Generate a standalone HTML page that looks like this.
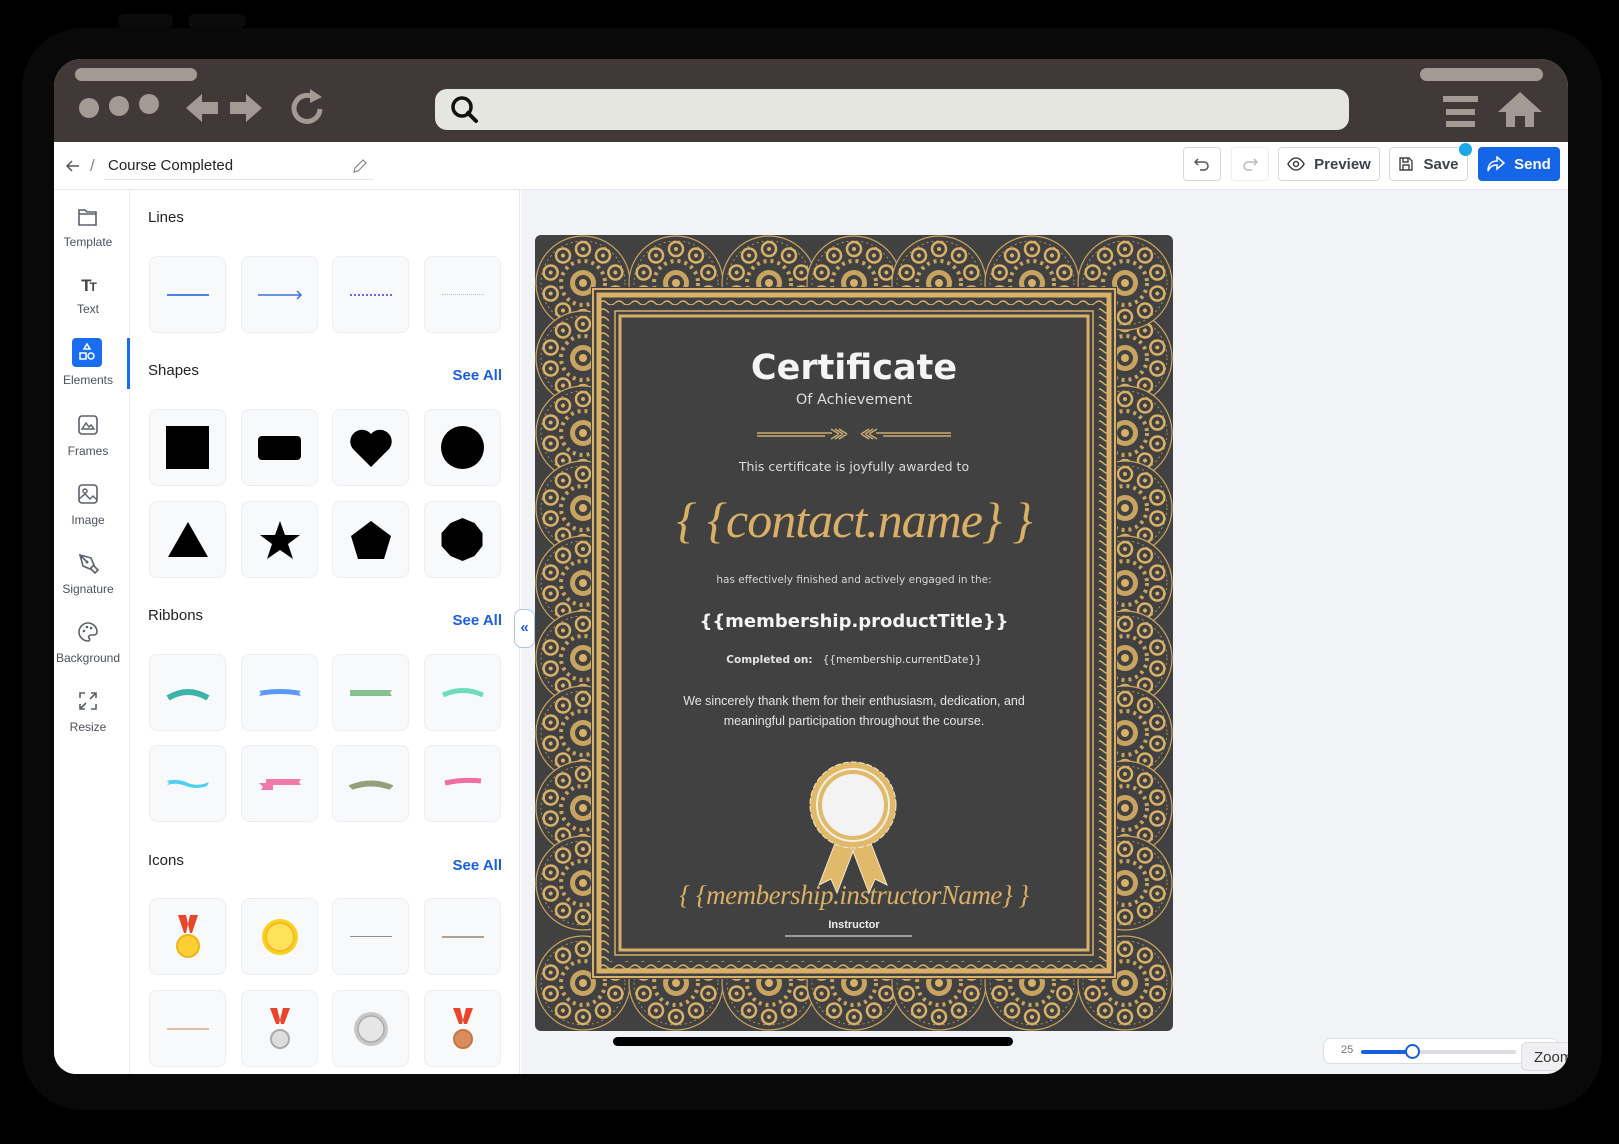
<!DOCTYPE html>
<html><head><meta charset="utf-8">
<style>
*{box-sizing:border-box;margin:0;padding:0}
body{width:1619px;height:1144px;background:#000;position:relative;overflow:hidden;font-family:"Liberation Sans",Arial,sans-serif}
.abs{position:absolute}
.bezel{left:22px;top:28px;width:1580px;height:1082px;background:#0a0909;border-radius:60px}
.win{left:54px;top:59px;width:1514px;height:1015px;background:#fff;border-radius:28px 28px 22px 22px;overflow:hidden}
.tb{left:0;top:0;width:1514px;height:83px;background:#413838}
.pill{background:#a39a93;border-radius:7px;height:13px}
.dot{width:20px;height:20px;border-radius:50%;background:#a39a93}
.appbar{left:0;top:83px;width:1514px;height:48px;background:#fff;border-bottom:1px solid #e8e9ee}
.btn{position:absolute;top:5px;height:34px;border:1px solid #d6d8de;border-radius:4px;background:#fff;font-weight:bold;font-size:15px;color:#3c4250;display:flex;align-items:center;justify-content:center;gap:9px}
.side{left:0;top:131px;width:76px;height:884px;background:#fff;border-right:1px solid #eceef2}
.si{position:absolute;left:0;width:68px;text-align:center;font-size:12px;color:#4b5160}
.si svg{display:block;margin:0 auto 8px}
.panel{left:76px;top:131px;width:390px;height:884px;background:#fff;border-right:1px solid #e4e6ea}
.h{position:absolute;left:18px;font-size:15px;color:#222;font-weight:500}
.see{position:absolute;right:17px;font-size:15px;color:#1a5fe0;font-weight:bold}
.card{position:absolute;width:77px;height:77px;background:#f8f9fb;border:1px solid #eceef1;border-radius:8px;display:flex;align-items:center;justify-content:center}
.canvas{left:467px;top:131px;width:1047px;height:884px;background:#f2f3f7}
.ct{position:absolute;left:0;width:638px;text-align:center;color:#e9e9e9}
</style></head><body>
<div class="abs bezel"></div>
<div class="abs" style="left:118px;top:14px;width:55px;height:14px;background:#0c0b0b;border-radius:6px"></div>
<div class="abs" style="left:188px;top:14px;width:58px;height:14px;background:#0c0b0b;border-radius:6px"></div>
<div class="abs win">
  <div class="abs tb">
    <div class="abs pill" style="left:21px;top:9px;width:122px"></div>
    <div class="abs pill" style="left:1366px;top:9px;width:123px"></div>
    <div class="abs dot" style="left:25px;top:39px"></div>
    <div class="abs dot" style="left:55px;top:37px"></div>
    <div class="abs dot" style="left:85px;top:35px"></div>
    <svg class="abs" style="left:132px;top:34px" width="84" height="30" viewBox="0 0 84 30"><path d="M0 15 L16 1 V9 H32 V21 H16 V29Z" fill="#a39a93"/><path d="M76 15 L60 1 V9 H44 V21 H60 V29Z" fill="#a39a93"/></svg>
    <svg class="abs" style="left:236px;top:28px" width="36" height="38" viewBox="0 0 36 38"><path d="M26 12 A13 13 0 1 0 30 22" fill="none" stroke="#a39a93" stroke-width="5"/><path d="M20 2 L32 10 L20 16Z" fill="#a39a93"/></svg>
    <div class="abs" style="left:381px;top:30px;width:914px;height:41px;background:#e6e6e1;border-radius:12px"></div>
    <svg class="abs" style="left:396px;top:36px" width="30" height="30" viewBox="0 0 30 30"><circle cx="12" cy="12" r="9" fill="none" stroke="#111" stroke-width="3.5"/><path d="M18 18 L26 26" stroke="#111" stroke-width="4" stroke-linecap="round"/></svg>
    <div class="abs" style="left:1389px;top:37px;width:35px;height:6px;background:#a39a93"></div>
    <div class="abs" style="left:1392px;top:50px;width:29px;height:6px;background:#a39a93"></div>
    <div class="abs" style="left:1392px;top:62px;width:29px;height:6px;background:#a39a93"></div>
    <svg class="abs" style="left:1444px;top:33px" width="44" height="36" viewBox="0 0 44 36"><path d="M22 0 L44 20 H36 V35 H27 V24 H17 V35 H8 V20 H0Z" fill="#a39a93"/></svg>
  </div>
  <div class="abs appbar">
    <svg class="abs" style="left:11px;top:16px" width="16" height="16" viewBox="0 0 16 16"><path d="M14 8H2M7 3L2 8l5 5" fill="none" stroke="#555" stroke-width="1.5"/></svg>
    <div class="abs" style="left:36px;top:14px;font-size:17px;color:#888">/</div>
    <div class="abs" style="left:54px;top:15px;font-size:15px;color:#222">Course Completed</div>
    <div class="abs" style="left:50px;top:37px;width:270px;height:1px;background:#e3e5ea"></div>
    <svg class="abs" style="left:298px;top:16px" width="16" height="16" viewBox="0 0 16 16"><path d="M11 2l3 3-8 8-4 1 1-4z" fill="none" stroke="#888" stroke-width="1.2"/></svg>
    <div class="btn" style="left:1129px;width:38px"><svg width="16" height="14" viewBox="0 0 16 14"><path d="M4 2L1 5l3 3M1 5h9a4 4 0 010 8H6" fill="none" stroke="#555" stroke-width="1.5"/></svg></div>
    <div class="btn" style="left:1177px;width:38px;border-color:#eee"><svg width="16" height="14" viewBox="0 0 16 14"><path d="M12 2l3 3-3 3M15 5H6a4 4 0 000 8h4" fill="none" stroke="#bbb" stroke-width="1.5"/></svg></div>
    <div class="btn" style="left:1224px;width:102px"><svg width="18" height="14" viewBox="0 0 18 14"><path d="M1 7s3-6 8-6 8 6 8 6-3 6-8 6-8-6-8-6z" fill="none" stroke="#444" stroke-width="1.5"/><circle cx="9" cy="7" r="2.5" fill="none" stroke="#444" stroke-width="1.5"/></svg>Preview</div>
    <div class="btn" style="left:1335px;width:79px"><svg width="16" height="16" viewBox="0 0 16 16"><path d="M2 2h9l3 3v9H2z M5 2v4h5V2 M5 14v-5h6v5" fill="none" stroke="#444" stroke-width="1.4"/></svg>Save</div>
    <div class="abs" style="left:1405px;top:1px;width:13px;height:13px;border-radius:50%;background:#1ba7e8"></div>
    <div class="btn" style="left:1424px;width:82px;background:#1565e9;border-color:#1565e9;color:#fff"><svg width="18" height="16" viewBox="0 0 18 16"><path d="M10 1l7 6-7 6V9C5 9 3 11 1 15c0-6 3-10 9-10z" fill="none" stroke="#fff" stroke-width="1.5"/></svg>Send</div>
  </div>
  <div class="abs side">
    <div class="si" style="top:17px"><svg width="22" height="20" viewBox="0 0 22 20"><path d="M2 3h6l2 2h9v13H2z M2 7h17" fill="none" stroke="#5b606c" stroke-width="1.6"/></svg>Template</div>
    <div class="si" style="top:86px"><div style="font-weight:bold;font-size:17px;color:#444;margin-bottom:6px;letter-spacing:-2px">T<span style="font-size:12px">T</span></div>Text</div>
    <div class="abs" style="left:18px;top:148px;width:30px;height:29px;background:#1a6cf0;border-radius:4px"></div>
    <svg class="abs" style="left:24px;top:152px" width="18" height="20" viewBox="0 0 18 20"><path d="M9 2l3 5H6z" fill="none" stroke="#fff" stroke-width="1.5"/><rect x="2" y="11" width="6" height="6" fill="none" stroke="#fff" stroke-width="1.5"/><circle cx="13" cy="14" r="3" fill="none" stroke="#fff" stroke-width="1.5"/></svg>
    <div class="si" style="top:183px">Elements</div>
    <div class="abs" style="left:73px;top:148px;width:3px;height:51px;background:#1a6cf0"></div>
    <div class="si" style="top:224px"><svg width="22" height="22" viewBox="0 0 22 22"><rect x="2" y="2" width="18" height="18" rx="3" fill="none" stroke="#5b606c" stroke-width="1.6"/><path d="M5 15l4-6 3 4 2-2 3 4z" fill="none" stroke="#5b606c" stroke-width="1.4"/></svg>Frames</div>
    <div class="si" style="top:293px"><svg width="22" height="22" viewBox="0 0 22 22"><rect x="2" y="2" width="18" height="18" rx="3" fill="none" stroke="#5b606c" stroke-width="1.6"/><circle cx="8" cy="8" r="2" fill="none" stroke="#5b606c" stroke-width="1.4"/><path d="M2 16l6-5 5 5 3-3 4 4" fill="none" stroke="#5b606c" stroke-width="1.4"/></svg>Image</div>
    <div class="si" style="top:362px"><svg width="22" height="22" viewBox="0 0 22 22"><path d="M3 3l11 3 3 7-4 4-7-3z M3 3l6 6 M14 17l4 4 3-3-4-4" fill="none" stroke="#5b606c" stroke-width="1.6"/><circle cx="10" cy="10" r="1.5" fill="#5b606c"/></svg>Signature</div>
    <div class="si" style="top:431px"><svg width="22" height="22" viewBox="0 0 22 22"><path d="M11 2a9 9 0 100 18c2 0 2-2 1-3s0-3 2-3h3a3 3 0 003-3c0-5-4-9-9-9z" fill="none" stroke="#5b606c" stroke-width="1.6"/><circle cx="7" cy="10" r="1.3" fill="#5b606c"/><circle cx="10" cy="6" r="1.3" fill="#5b606c"/><circle cx="14" cy="7" r="1.3" fill="#5b606c"/></svg>Background</div>
    <div class="si" style="top:500px"><svg width="22" height="22" viewBox="0 0 22 22"><path d="M3 8V3h5 M14 3h5v5 M3 14v5h5 M19 14v5h-5 M19 3l-6 6 M3 19l6-6" fill="none" stroke="#5b606c" stroke-width="1.6"/></svg>Resize</div>
  </div>
  <div class="abs panel">
    <div class="h" style="top:19px">Lines</div>
    <div class="card" style="left:19px;top:66px"><div style="width:42px;height:2px;background:#4a82e6"></div></div>
    <div class="card" style="left:111px;top:66px"><svg width="46" height="10" viewBox="0 0 46 10"><path d="M1 5h43M40 1l4 4-4 4" fill="none" stroke="#3a74e0" stroke-width="1.5"/></svg></div>
    <div class="card" style="left:202px;top:66px"><div style="width:42px;border-top:2px dotted #6a6ae0"></div></div>
    <div class="card" style="left:294px;top:66px"><div style="width:42px;border-top:1px dotted #b5b5e8"></div></div>
    <div class="h" style="top:172px">Shapes</div><div class="see" style="top:177px">See All</div>
    <div class="card" style="left:19px;top:219px"><div style="width:43px;height:43px;background:#000"></div></div>
    <div class="card" style="left:111px;top:219px"><div style="width:43px;height:24px;background:#000;border-radius:4px"></div></div>
    <div class="card" style="left:202px;top:219px"><svg width="44" height="40" viewBox="0 0 44 40"><path d="M22 39L4 21A11 11 0 0122 6a11 11 0 0118 15z" fill="#000"/></svg></div>
    <div class="card" style="left:294px;top:219px"><div style="width:43px;height:43px;background:#000;border-radius:50%"></div></div>
    <div class="card" style="left:19px;top:311px"><svg width="42" height="37" viewBox="0 0 42 37"><path d="M21 1L41 36H1z" fill="#000"/></svg></div>
    <div class="card" style="left:111px;top:311px"><svg width="42" height="40" viewBox="0 0 42 40"><path d="M21 1l5 14h15l-12 9 5 15-13-9-13 9 5-15L1 15h15z" fill="#000"/></svg></div>
    <div class="card" style="left:202px;top:311px"><svg width="42" height="40" viewBox="0 0 42 40"><path d="M21 1l20 15-7 23H8L1 16z" fill="#000"/></svg></div>
    <div class="card" style="left:294px;top:311px"><svg width="43" height="43" viewBox="0 0 43 43"><path d="M21.5 0l12 5 8 10v13l-8 10-12 5-12-5-9-10V15l9-10z" fill="#000"/></svg></div>
    <div class="h" style="top:417px">Ribbons</div><div class="see" style="top:422px">See All</div>
    <div class="card" style="left:19px;top:464px"><svg width="44" height="14" viewBox="0 0 44 14"><path d="M2 12 Q22 0 42 12" fill="none" stroke="#3bb5a8" stroke-width="6"/></svg></div>
    <div class="card" style="left:111px;top:464px"><svg width="44" height="10" viewBox="0 0 44 10"><path d="M1 3 Q22 -1 43 3 L41 5 43 8 Q22 4 1 8 L3 5z" fill="#5a9af5"/></svg></div>
    <div class="card" style="left:202px;top:464px"><svg width="44" height="10" viewBox="0 0 44 10"><path d="M1 2h42l-2 3 2 3H1z" fill="#87c08f"/></svg></div>
    <div class="card" style="left:294px;top:464px"><svg width="44" height="14" viewBox="0 0 44 14"><path d="M2 9 Q22 0 42 9" fill="none" stroke="#6fdcc0" stroke-width="5"/></svg></div>
    <div class="card" style="left:19px;top:555px"><svg width="44" height="12" viewBox="0 0 44 12"><path d="M1 3 Q12 0 22 5 Q32 9 43 4 L41 8 Q30 12 20 8 Q10 4 1 7 L3 5z" fill="#4fd0f0"/></svg></div>
    <div class="card" style="left:111px;top:555px"><svg width="44" height="14" viewBox="0 0 44 14"><path d="M8 2h35l-2 3 2 3H8z M1 6h14v7H3l2-3z" fill="#ef7aaa"/></svg></div>
    <div class="card" style="left:202px;top:555px"><svg width="44" height="12" viewBox="0 0 44 12"><path d="M2 8 Q22 0 42 8 L40 10 Q22 4 4 10z" fill="#95a07a" stroke="#95a07a" stroke-width="3"/></svg></div>
    <div class="card" style="left:294px;top:555px"><svg width="44" height="14" viewBox="0 0 44 14"><path d="M4 6 Q22 2 40 4" fill="none" stroke="#ee6fa3" stroke-width="5"/></svg></div>
    <div class="h" style="top:662px">Icons</div><div class="see" style="top:667px">See All</div>
    <div class="card" style="left:19px;top:708px"><svg width="30" height="44" viewBox="0 0 30 44"><path d="M5 0h8l4 18h-6z M25 0h-8l-4 18h6z" fill="#e8452a"/><circle cx="15" cy="31" r="11" fill="#fcd033" stroke="#f2b21b" stroke-width="2"/></svg></div>
    <div class="card" style="left:111px;top:708px"><svg width="38" height="38" viewBox="0 0 38 38"><circle cx="19" cy="19" r="18" fill="#fbd01f"/><circle cx="19" cy="19" r="14" fill="#fde25a" stroke="#f2b21b" stroke-width="1.5"/></svg></div>
    <div class="card" style="left:202px;top:708px"><div style="width:42px;height:1px;background:#9c8c80"></div></div>
    <div class="card" style="left:294px;top:708px"><div style="width:42px;height:2px;background:#b0a090"></div></div>
    <div class="card" style="left:19px;top:800px"><div style="width:42px;height:2px;background:#d8c4a0"></div></div>
    <div class="card" style="left:111px;top:800px"><svg width="24" height="42" viewBox="0 0 24 42"><path d="M2 0h7l4 16h-5z M22 0h-7l-4 16h5z" fill="#e8452a"/><circle cx="12" cy="31" r="9" fill="#ddd" stroke="#aaa" stroke-width="2"/></svg></div>
    <div class="card" style="left:202px;top:800px"><svg width="36" height="36" viewBox="0 0 36 36"><circle cx="18" cy="18" r="17" fill="#c8c8c8"/><circle cx="18" cy="18" r="13" fill="#e6e6e6" stroke="#aaa" stroke-width="1.5"/></svg></div>
    <div class="card" style="left:294px;top:800px"><svg width="24" height="42" viewBox="0 0 24 42"><path d="M2 0h7l4 16h-5z M22 0h-7l-4 16h5z" fill="#e8452a"/><circle cx="12" cy="31" r="9" fill="#d98d5c" stroke="#c57746" stroke-width="2"/></svg></div>
  </div>
  <div class="abs canvas">
    <div class="abs" style="left:-7px;top:419px;width:21px;height:39px;background:#fff;border:1px solid #a9c4f4;border-radius:8px;color:#1a5fe0;font-size:15px;text-align:center;line-height:35px;font-weight:bold">«</div>
    <div class="abs" style="left:92px;top:847px;width:400px;height:9px;background:#000;border-radius:5px"></div>
    <div class="abs" style="left:802px;top:848px;width:236px;height:26px;background:#fff;border:1px solid #dcdde2;border-radius:8px"></div>
    <div class="abs" style="left:820px;top:854px;font-size:11px;color:#777">25</div>
    <div class="abs" style="left:840px;top:860px;width:155px;height:4px;background:#dcdde2;border-radius:2px"></div>
    <div class="abs" style="left:840px;top:860px;width:52px;height:4px;background:#1a5fe0;border-radius:2px"></div>
    <div class="abs" style="left:884px;top:854px;width:15px;height:15px;border-radius:50%;background:#fff;border:2px solid #1a5fe0"></div>
    <div class="abs" style="left:1000px;top:852px;width:60px;height:29px;background:#f0f0f2;border:1px solid #ddd;border-radius:6px;font-size:15px;color:#333;padding:6px 0 0 12px">Zoom</div>
  </div>
  <!-- certificate -->
  <div class="abs" style="left:481px;top:176px;width:638px;height:796px">
  <svg width="638" height="796" viewBox="0 0 638 796" style="position:absolute;left:0;top:0">
    <defs>
      <g id="ros">
        <circle r="47" fill="#414141" stroke="#c9a461" stroke-width="1.2"/>
        <circle r="42" fill="none" stroke="#c9a461" stroke-width="0.8" stroke-dasharray="2 3"/>
        <g id="pet"><circle cx="0" cy="-34" r="7" fill="none" stroke="#d8b068" stroke-width="2.5"/><circle cx="0" cy="-34" r="2" fill="#d8b068"/></g>
        <use href="#pet" transform="rotate(36)"/><use href="#pet" transform="rotate(72)"/><use href="#pet" transform="rotate(108)"/><use href="#pet" transform="rotate(144)"/><use href="#pet" transform="rotate(180)"/><use href="#pet" transform="rotate(216)"/><use href="#pet" transform="rotate(252)"/><use href="#pet" transform="rotate(288)"/><use href="#pet" transform="rotate(324)"/>
        <circle r="22" fill="none" stroke="#c9a461" stroke-width="4" stroke-dasharray="3 4"/>
        <circle r="13" fill="#c9a461"/>
        <circle r="8" fill="#414141"/>
        <circle r="4" fill="#d8b068"/>
      </g>
      <pattern id="wv" width="16" height="8" patternUnits="userSpaceOnUse"><path d="M0 4 Q4 0 8 4 T16 4" fill="none" stroke="#d8b068" stroke-width="1.3"/></pattern>
    </defs>
    <rect width="638" height="796" rx="6" fill="#414141"/>
    <g>
      <use href="#ros" x="48" y="48"/><use href="#ros" x="141" y="48"/><use href="#ros" x="234" y="48"/><use href="#ros" x="319" y="48"/><use href="#ros" x="404" y="48"/><use href="#ros" x="497" y="48"/>
      <use href="#ros" x="48" y="748"/><use href="#ros" x="141" y="748"/><use href="#ros" x="234" y="748"/><use href="#ros" x="319" y="748"/><use href="#ros" x="404" y="748"/><use href="#ros" x="497" y="748"/>
      <use href="#ros" x="48" y="123"/><use href="#ros" x="48" y="198"/><use href="#ros" x="48" y="273"/><use href="#ros" x="48" y="348"/><use href="#ros" x="48" y="423"/><use href="#ros" x="48" y="498"/><use href="#ros" x="48" y="573"/><use href="#ros" x="48" y="648"/>
      <use href="#ros" x="590" y="123"/><use href="#ros" x="590" y="198"/><use href="#ros" x="590" y="273"/><use href="#ros" x="590" y="348"/><use href="#ros" x="590" y="423"/><use href="#ros" x="590" y="498"/><use href="#ros" x="590" y="573"/><use href="#ros" x="590" y="648"/>
      <use href="#ros" x="590" y="48"/><use href="#ros" x="590" y="748"/>
    </g>
    <rect x="56" y="52" width="526" height="692" fill="#414141"/>
    <rect x="58" y="54" width="522" height="688" fill="none" stroke="#d8b068" stroke-width="2"/>
    <rect x="64" y="60" width="510" height="676" fill="none" stroke="#d8b068" stroke-width="5"/>
    <rect x="70" y="66" width="498" height="664" fill="none" stroke="url(#wv)" stroke-width="8"/>
    <rect x="80" y="76" width="478" height="644" fill="none" stroke="#d8b068" stroke-width="1.5"/>
    <rect x="85" y="81" width="468" height="634" fill="none" stroke="#d8b068" stroke-width="3"/>
    <path d="M222 198h75 M222 201h68 M341 198h75 M348 201h68" stroke="#c8aa70" stroke-width="1.5"/>
    <path d="M296 194l8 5 M300 194l8 5 M304 194l8 5 M296 204l8-5 M300 204l8-5 M304 204l8-5 M342 194l-8 5 M338 194l-8 5 M334 194l-8 5 M342 204l-8-5 M338 204l-8-5 M334 204l-8-5" stroke="#c8aa70" stroke-width="1.5"/>
    <g transform="translate(318,570)">
      <path d="M-14 28 L-34 80 L-22 74 L-16 88 L4 36z M14 28 L34 80 L22 74 L16 88 L-4 36z" fill="#e0b96a" stroke="#f3e8cc" stroke-width="1"/>
      <circle r="43" fill="#e0b96a" stroke="#f3e8cc" stroke-width="1" stroke-dasharray="6 2"/>
      <circle r="36" fill="none" stroke="#f5f0e4" stroke-width="2"/>
      <circle r="31" fill="#f3f3f3"/>
    </g>
    <path d="M250 701h127" stroke="#bbb" stroke-width="1.5"/>
  </svg>
  <div class="ct" style="top:113px;font-size:35px;font-weight:bold;color:#f4f4f4;font-family:'DejaVu Sans','Liberation Sans',sans-serif">Certificate</div>
  <div class="ct" style="top:157px;font-size:14.5px;color:#dcdcdc;font-family:'DejaVu Sans',sans-serif">Of Achievement</div>
  <div class="ct" style="top:224px;font-size:12.5px;color:#dcdcdc;font-family:'DejaVu Sans',sans-serif">This certificate is joyfully awarded to</div>
  <div class="ct" style="top:256px;font-size:50px;color:#d9b066;font-family:'Liberation Serif',serif;font-style:italic;letter-spacing:-1px">{ {contact.name} }</div>
  <div class="ct" style="top:339px;font-size:10.5px;color:#d6d6d6;font-family:'DejaVu Sans',sans-serif">has effectively finished and actively engaged in the:</div>
  <div class="ct" style="top:376px;font-size:18px;font-weight:bold;color:#f4f4f4;font-family:'DejaVu Sans',sans-serif">{{membership.productTitle}}</div>
  <div class="ct" style="top:419px;font-size:10.5px;color:#e4e4e4;font-family:'DejaVu Sans',sans-serif"><b>Completed on:</b>&nbsp;&nbsp; {{membership.currentDate}}</div>
  <div class="ct" style="top:456px;font-size:12.5px;line-height:20px;color:#e4e4e4">We sincerely thank them for their enthusiasm, dedication, and<br>meaningful participation throughout the course.</div>
  <div class="ct" style="top:645px;font-size:27px;color:#d9b066;font-family:'Liberation Serif',serif;font-style:italic;letter-spacing:-0.5px">{ {membership.instructorName} }</div>
  <div class="ct" style="top:684px;font-size:11px;font-weight:bold;color:#eee">Instructor</div>
  </div>
</div>
</body></html>
